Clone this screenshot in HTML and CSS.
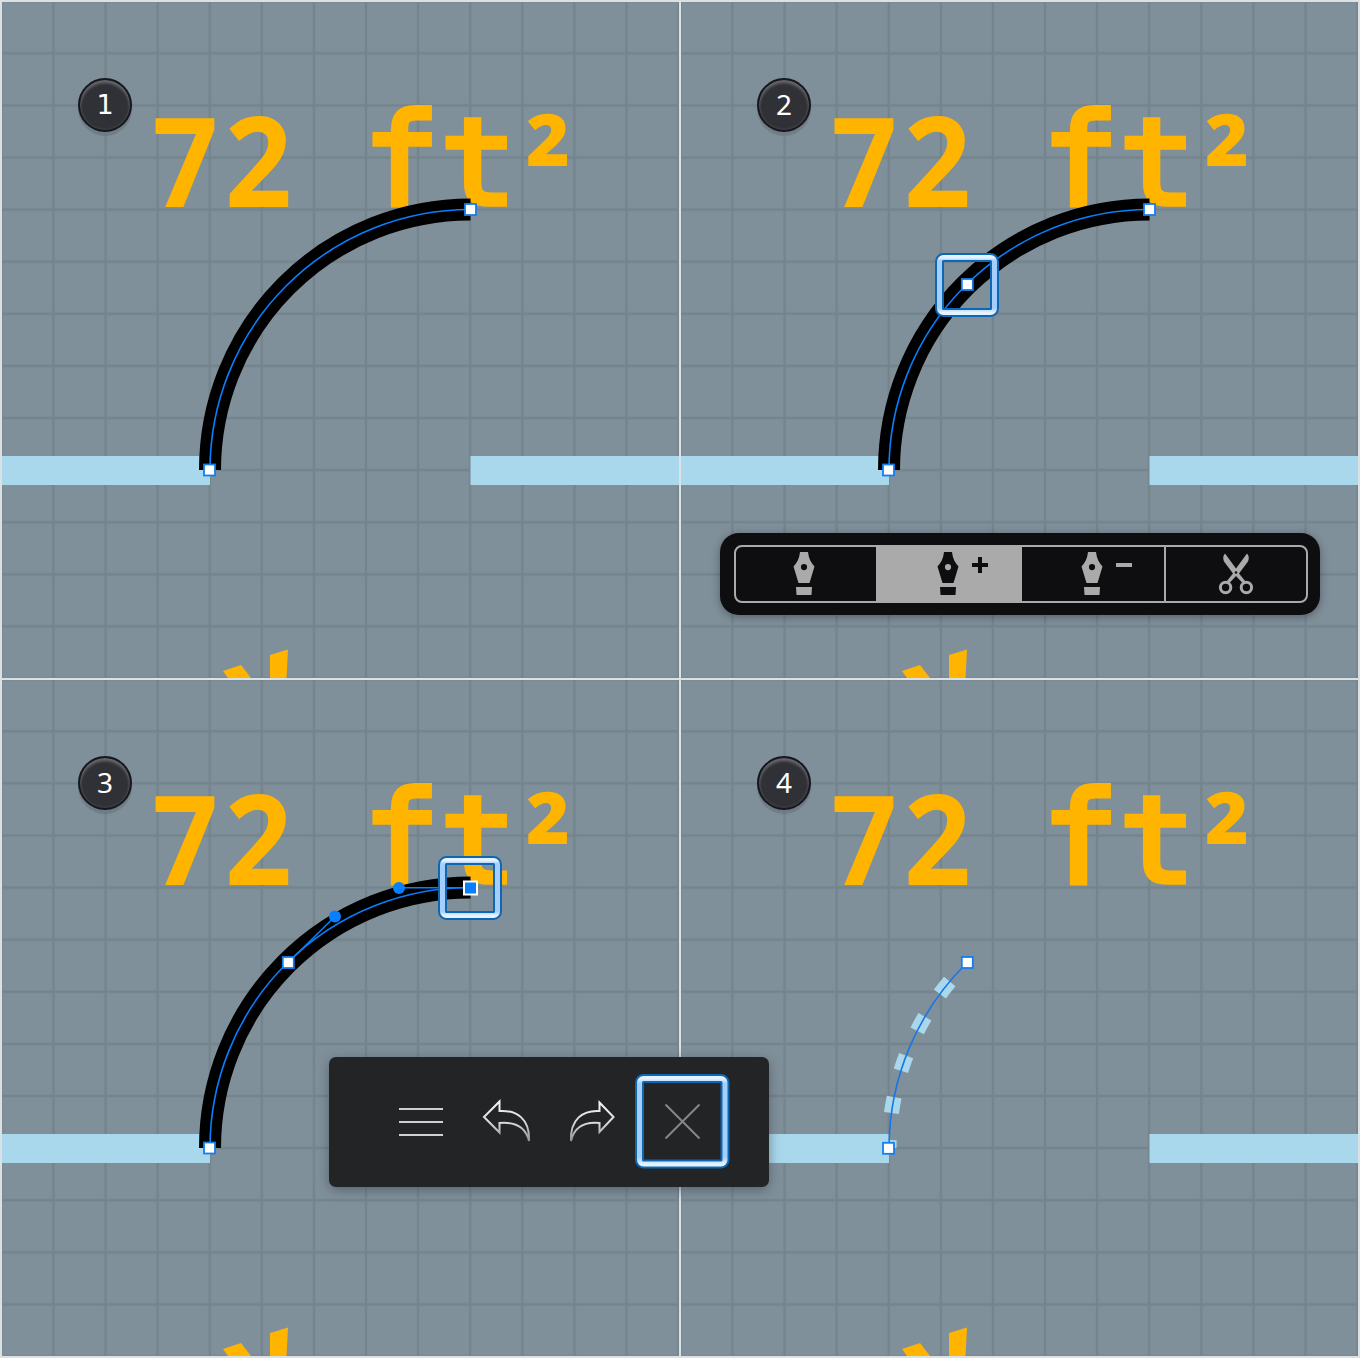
FILE: index.html
```html
<!DOCTYPE html>
<html lang="en">
<head>
<meta charset="utf-8">
<title>Editing a path</title>
<link rel="stylesheet" href="styles.css">
</head>
<body>
<svg class="defs" width="0" height="0" aria-hidden="true">
  <defs>
    <pattern id="grid" x="1.3" y="1.2" width="52.1" height="52.1" patternUnits="userSpaceOnUse">
      <path class="grid-line" d="M0 0H52.1V1.2H0ZM0 0H1.2V52.1H0ZM50.9 0H52.1V52.1H50.9ZM0 50.9H52.1V52.1H0Z"/>
    </pattern>
    <linearGradient id="shine" x1="0" y1="0" x2="0" y2="1">
      <stop offset="0" stop-color="#e5f2ff"/><stop offset=".06" stop-color="#a4cefb"/>
      <stop offset=".92" stop-color="#a4cefb"/><stop offset="1" stop-color="#e5f2ff"/>
    </linearGradient>
    <linearGradient id="metal" x1="0" y1="0" x2="0" y2="1">
      <stop offset="0" stop-color="#f4f4f4"/><stop offset=".55" stop-color="#d8d8d8"/><stop offset="1" stop-color="#909192"/>
    </linearGradient>
    <g id="plan">
      <rect class="ground" x="2" y="2" width="677" height="676"/>
      <rect x="2" y="2" width="677" height="676" fill="url(#grid)"/>
      <path class="wall" d="M2 456H210V485H2ZM470.5 456H679V485H470.5Z"/>
      <g class="area">
        <text transform="translate(152.500 206.5) scale(.91 .99)">7</text>
        <text transform="translate(225 206.5) scale(.93 1)">2</text>
        <text class="area-unit" transform="translate(363.500 203.500)">f</text>
        <text class="area-unit" transform="translate(440.500 204) scale(1 .95)">t</text>
        <text transform="translate(525 215.500) scale(.97 .95)">²</text>
      </g>
      <path class="accent" d="M223 671 241 665 251 678H228ZM270 655 288 649.5 286.500 678H270Z"/>
    </g>
    <g id="arc">
      <path class="door" d="M210 470A260.500 260.500 0 0 1 470.500 209.500"/>
      <path class="path-line" d="M210 470A260.500 260.500 0 0 1 470.500 209.500"/>
    </g>
    <rect id="node" class="node" x="-5.500" y="-5.500" width="11" height="11"/>
    <g id="focus">
      <rect class="focus-edge" x="-27.500" y="-27.500" width="55" height="55" rx="4"/>
      <rect class="focus-fill" x="-27.500" y="-27.500" width="55" height="55" rx="4"/>
    </g>
    <g id="pen">
      <path fill-rule="evenodd" d="M8 0H16C16.500 6 19 11 22.500 14.500L17.500 31H6.500L1.500 14.500C5 11 7.500 6 8 0ZM12 12A3.100 3.100 0 1 0 12 18.200A3.100 3.100 0 1 0 12 12Z"/>
      <path d="M4 35H20L19.500 43H4.500Z"/>
    </g>
  </defs>
</svg>

<main class="board">
  <section class="panel">
    <svg class="canvas" viewBox="2 2 677 676">
      <use href="#plan"/><use href="#arc"/>
      <use href="#node" x="209.500" y="470"/><use href="#node" x="470.500" y="209.500"/>
    </svg>
    <span class="badge badge-first">1</span>
  </section>

  <section class="panel">
    <svg class="canvas" viewBox="2 2 677 676">
      <use href="#plan"/><use href="#arc"/>
      <use href="#node" x="209.500" y="470"/><use href="#node" x="470.500" y="209.500"/>
      <use href="#node" x="288.300" y="284.500"/><use href="#focus" x="288" y="285"/>
    </svg>
    <span class="badge">2</span>
    <div class="tools">
      <div class="tool-group">
        <button class="tool" aria-label="Pen"><svg width="64" height="44"><use href="#pen" x="20"/></svg></button>
        <button class="tool tool-active" aria-label="Add node"><svg width="64" height="44"><use href="#pen" x="20"/><path d="M62 5H66V11H72V15H66V21H62V15H56V11H62Z"/></svg></button>
        <button class="tool" aria-label="Remove node"><svg width="64" height="44"><use href="#pen" x="20"/><path d="M56 11H72V15H56Z"/></svg></button>
        <button class="tool tool-last" aria-label="Scissors"><svg width="64" height="44">
          <path d="M21 1.500Q18 5 20 9.500L29 21.500L22.500 29.500L25 31.500L32 24L39 31.500L41.500 29.500L35 21.500L44 9.500Q46 5 43 1.500L32 16.500Z"/>
          <g class="rings"><circle cx="21.600" cy="35.500" r="5.200"/><circle cx="42.400" cy="35.500" r="5.200"/></g><circle class="pivot" cx="32" cy="20.500" r="1.300"/>
        </svg></button>
      </div>
    </div>
  </section>

  <section class="panel">
    <svg class="canvas" viewBox="2 2 677 676">
      <use href="#plan"/><use href="#arc"/>
      <path class="path-line" d="M288.300 284.500 335 238.500M399 209.800H470.500"/>
      <circle class="handle" cx="335" cy="238.500" r="6"/><circle class="handle" cx="399" cy="210" r="6"/>
      <use href="#node" x="209.500" y="470"/><use href="#node" x="288.300" y="284.500"/>
      <rect class="node-selected" x="464" y="203.500" width="13" height="13"/>
      <use href="#focus" x="470" y="210"/>
    </svg>
    <span class="badge">3</span>
  </section>

  <section class="panel">
    <svg class="canvas" viewBox="2 2 677 676">
      <use href="#plan"/>
      <path class="dashes" d="M210 470A260.500 260.500 0 0 1 288.300 284.500"/>
      <path class="path-line path-dark" d="M210 470A260.500 260.500 0 0 1 288.300 284.500"/>
      <use href="#node" x="209.500" y="470.300"/><use href="#node" x="288.300" y="284.500"/>
    </svg>
    <span class="badge">4</span>
  </section>

  <nav class="menu">
    <button class="menu-item" aria-label="Menu"><svg width="48" height="48"><path class="bars" d="M2 11H46M2 24H46M2 37H46"/></svg></button>
    <button class="menu-item" aria-label="Undo"><svg width="48" height="48"><path class="arrow" d="M1 19 16.500 3.500V13C34 12 47 21 46 43C43 30 33 23.500 16.500 25V34.500Z"/></svg></button>
    <button class="menu-item" aria-label="Redo"><svg width="48" height="48"><path class="arrow" d="M44.500 19 30.500 4.500V13C14 12 1 21 2 43C5 30 14 23.500 30.500 25V34Z"/></svg></button>
    <button class="menu-item" aria-label="Close"><svg width="94" height="94">
      <path class="cross" d="M29.500 28.500 63.500 62.500M63.500 28.500 29.500 62.500"/>
      <rect class="focus-edge" x="3.500" y="2.500" width="85.500" height="85.500" rx="4"/>
      <rect class="focus-fill" x="3.500" y="2.500" width="85.500" height="85.500" rx="4"/>
    </svg></button>
  </nav>
</main>
</body>
</html>
```
FILE: styles.css
```css
* { box-sizing: border-box; }
body { margin: 0; background: #dce1e3; }
button { appearance: none; border: 0; padding: 0; background: none; color: inherit; }
svg { display: block; overflow: visible; }
.defs { position: absolute; }

.board {
  position: relative;
  display: grid;
  grid-template-columns: 677px 677px;
  grid-template-rows: 676px 676px;
  gap: 2px;
  padding: 2px;
  width: 1360px;
  height: 1358px;
}
.panel { position: relative; }
.canvas { width: 677px; height: 676px; overflow: hidden; }

.ground { fill: #80909a; }
.grid-line { fill: #74848d; }
.wall { fill: #a9d8ed; }
.accent, .area { fill: #ffb400; }
.area { font: 700 126px "Noto Sans", sans-serif; }
.area-unit {
  font: 400 126px "DejaVu Sans Mono", monospace;
  stroke: #ffb400;
  stroke-width: 6;
  stroke-linejoin: miter;
}

.door { fill: none; stroke: #000; stroke-width: 22; }
.path-line { fill: none; stroke: #087fff; stroke-width: 1.6; }
.path-dark { stroke: #1676e8; }
.node { fill: #fff; stroke: #147eee; stroke-width: 1.8; }
.node-selected { fill: #087fff; stroke: #fff; stroke-width: 2; }
.handle { fill: #087fff; }
.dashes { fill: none; stroke: #a9d8ed; stroke-width: 15; stroke-dasharray: 16 27.2; stroke-dashoffset: 8; }
.focus-edge { fill: none; stroke: #0d67b3; stroke-width: 9; }
.focus-fill { fill: none; stroke: url(#shine); stroke-width: 5; }

.badge {
  position: absolute;
  left: 76px;
  top: 76px;
  width: 54px;
  height: 54px;
  border: 2px solid #17181f;
  border-radius: 50%;
  background: #303136;
  box-shadow: inset 0 3px 3px #66676b, inset 0 0 3px #55565b, 0 4px 1px #66727a99;
  color: #fff;
  font: 28px/48px "Noto Sans", sans-serif;
  text-align: center;
}
.badge-first { font: 27px/50px "DejaVu Sans", sans-serif; }

.tools {
  position: absolute;
  left: 39px;
  top: 531px;
  width: 600px;
  height: 82px;
  padding: 12px 12px 12px 14px;
  border-radius: 19px;
  background: #0e0e10;
  box-shadow: 0 2px 8px #25303880;
}
.tool-group {
  display: grid;
  grid-template-columns: 140px 146px 142px 142px;
  height: 58px;
  border: 2px solid #aaa;
  border-radius: 8px;
  color: #aaa;
}
.tool { display: flex; align-items: flex-start; padding: 5px 0 0 36px; fill: currentColor; }
.tool-active { padding-left: 40px; background: #aaa; color: #0e0e10; }
.tool-active + .tool { padding-left: 38px; }
.tool-last { border-left: 2px solid #aaa; padding-left: 38px; }
.rings { fill: none; stroke: currentColor; stroke-width: 3; }
.pivot { fill: #0e0e10; }

.menu {
  position: absolute;
  left: 329px;
  top: 1057px;
  width: 440px;
  height: 130px;
  display: flex;
  align-items: center;
  gap: 38px;
  padding-left: 68px;
  border-radius: 7px;
  background: #222426;
  box-shadow: 0 3px 12px #35424c90;
}
.menu-item:last-child { margin-left: -19px; padding-bottom: 18px; margin-bottom: -20px; }
.bars { stroke: #d0d0d0; stroke-width: 2; }
.arrow { fill: none; stroke: url(#metal); stroke-width: 2; }
.cross { stroke: #858687; stroke-width: 2; }
```
